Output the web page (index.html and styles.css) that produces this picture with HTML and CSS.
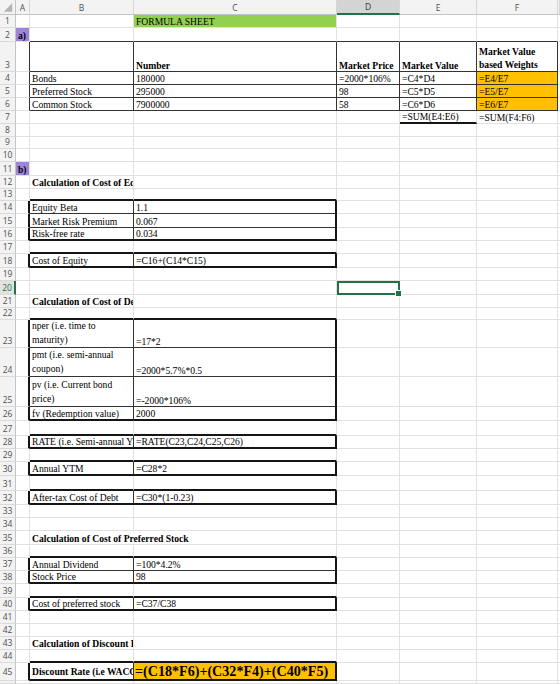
FILE: index.html
```html
<!DOCTYPE html>
<html>
<head>
<meta charset="utf-8">
<link rel="stylesheet" href="styles.css">
</head>
<body>
<div class="sheet">
  <div class="row hd"><div class="corner"><svg width="16" height="15" viewBox="0 0 16 15"><polygon points="13,3 13,12 4,12" fill="#b3b3b3"/></svg></div><div>A</div><div>B</div><div>C</div><div class="selh">D</div><div>E</div><div>F</div><div></div></div>
  <div class="row"><div class="rh">1</div><div></div><div></div><div class="green">FORMULA SHEET</div><div></div><div></div><div></div><div></div></div>
  <div class="row"><div class="rh">2</div><div class="purple bd">a)</div><div class="b"></div><div class="b"></div><div class="b"></div><div class="b"></div><div class="b"></div><div></div></div>
  <div class="row"><div class="rh">3</div><div class="r"></div><div class="b r"></div><div class="b r bd">Number</div><div class="b r bd">Market Price</div><div class="b r bd">Market Value</div><div class="b r bd wr2">Market Value based Weights</div><div></div></div>
  <div class="row"><div class="rh">4</div><div class="r"></div><div class="b r">Bonds</div><div class="b r">180000</div><div class="b r">=2000*106%</div><div class="b r">=C4*D4</div><div class="b r orange">=E4/E7</div><div></div></div>
  <div class="row"><div class="rh">5</div><div class="r"></div><div class="b r">Preferred Stock</div><div class="b r">295000</div><div class="b r">98</div><div class="b r">=C5*D5</div><div class="b r orange">=E5/E7</div><div></div></div>
  <div class="row"><div class="rh">6</div><div class="r"></div><div class="b r">Common Stock</div><div class="b r">7900000</div><div class="b r">58</div><div class="b r">=C6*D6</div><div class="b r orange">=E6/E7</div><div></div></div>
  <div class="row"><div class="rh">7</div><div></div><div></div><div></div><div></div><div class="B">=SUM(E4:E6)</div><div>=SUM(F4:F6)</div><div></div></div>
  <div class="row"><div class="rh">8</div><div></div><div></div><div></div><div></div><div></div><div></div><div></div></div>
  <div class="row"><div class="rh">9</div><div></div><div></div><div></div><div></div><div></div><div></div><div></div></div>
  <div class="row"><div class="rh">10</div><div></div><div></div><div></div><div></div><div></div><div></div><div></div></div>
  <div class="row"><div class="rh">11</div><div class="purple bd">b)</div><div></div><div></div><div></div><div></div><div></div><div></div></div>
  <div class="row"><div class="rh">12</div><div></div><div class="bd">Calculation of Cost of Equity</div><div></div><div></div><div></div><div></div><div></div></div>
  <div class="row"><div class="rh">13</div><div></div><div class="B"></div><div class="B"></div><div></div><div></div><div></div><div></div></div>
  <div class="row"><div class="rh">14</div><div class="R"></div><div class="r b">Equity Beta</div><div class="R b">1.1</div><div></div><div></div><div></div><div></div></div>
  <div class="row"><div class="rh">15</div><div class="R"></div><div class="r b">Market Risk Premium</div><div class="R b">0.067</div><div></div><div></div><div></div><div></div></div>
  <div class="row"><div class="rh">16</div><div class="R"></div><div class="r B">Risk-free rate</div><div class="R B">0.034</div><div></div><div></div><div></div><div></div></div>
  <div class="row"><div class="rh">17</div><div></div><div class="B"></div><div class="B"></div><div></div><div></div><div></div><div></div></div>
  <div class="row"><div class="rh">18</div><div class="R"></div><div class="r B">Cost of Equity</div><div class="R B">=C16+(C14*C15)</div><div></div><div></div><div></div><div></div></div>
  <div class="row"><div class="rh">19</div><div></div><div></div><div></div><div></div><div></div><div></div><div></div></div>
  <div class="row"><div class="rh selr">20</div><div></div><div></div><div></div><div class="sel"></div><div></div><div></div><div></div></div>
  <div class="row"><div class="rh">21</div><div></div><div class="bd">Calculation of Cost of Debt</div><div></div><div></div><div></div><div></div><div></div></div>
  <div class="row"><div class="rh">22</div><div></div><div class="B"></div><div class="B"></div><div></div><div></div><div></div><div></div></div>
  <div class="row"><div class="rh">23</div><div class="R"></div><div class="r b wr">nper (i.e. time to maturity)</div><div class="R b">=17*2</div><div></div><div></div><div></div><div></div></div>
  <div class="row"><div class="rh">24</div><div class="R"></div><div class="r b wr">pmt (i.e. semi-annual coupon)</div><div class="R b">=2000*5.7%*0.5</div><div></div><div></div><div></div><div></div></div>
  <div class="row"><div class="rh">25</div><div class="R"></div><div class="r b wr">pv (i.e. Current bond price)</div><div class="R b">=-2000*106%</div><div></div><div></div><div></div><div></div></div>
  <div class="row"><div class="rh">26</div><div class="R"></div><div class="r B">fv (Redemption value)</div><div class="R B">2000</div><div></div><div></div><div></div><div></div></div>
  <div class="row"><div class="rh">27</div><div></div><div class="B"></div><div class="B"></div><div></div><div></div><div></div><div></div></div>
  <div class="row"><div class="rh">28</div><div class="R"></div><div class="r B">RATE (i.e. Semi-annual YTM)</div><div class="R B">=RATE(C23,C24,C25,C26)</div><div></div><div></div><div></div><div></div></div>
  <div class="row"><div class="rh">29</div><div></div><div class="B"></div><div class="B"></div><div></div><div></div><div></div><div></div></div>
  <div class="row"><div class="rh">30</div><div class="R"></div><div class="r B">Annual YTM</div><div class="R B">=C28*2</div><div></div><div></div><div></div><div></div></div>
  <div class="row"><div class="rh">31</div><div></div><div class="B"></div><div class="B"></div><div></div><div></div><div></div><div></div></div>
  <div class="row"><div class="rh">32</div><div class="R"></div><div class="r B">After-tax Cost of Debt</div><div class="R B">=C30*(1-0.23)</div><div></div><div></div><div></div><div></div></div>
  <div class="row"><div class="rh">33</div><div></div><div></div><div></div><div></div><div></div><div></div><div></div></div>
  <div class="row"><div class="rh">34</div><div></div><div></div><div></div><div></div><div></div><div></div><div></div></div>
  <div class="row"><div class="rh">35</div><div></div><div class="bd span2">Calculation of Cost of Preferred Stock</div><div></div><div></div><div></div><div></div></div>
  <div class="row"><div class="rh">36</div><div></div><div class="B"></div><div class="B"></div><div></div><div></div><div></div><div></div></div>
  <div class="row"><div class="rh">37</div><div class="R"></div><div class="r b">Annual Dividend</div><div class="R b">=100*4.2%</div><div></div><div></div><div></div><div></div></div>
  <div class="row"><div class="rh">38</div><div class="R"></div><div class="r B">Stock Price</div><div class="R B">98</div><div></div><div></div><div></div><div></div></div>
  <div class="row"><div class="rh">39</div><div></div><div class="B"></div><div class="B"></div><div></div><div></div><div></div><div></div></div>
  <div class="row"><div class="rh">40</div><div class="R"></div><div class="r B">Cost of preferred stock</div><div class="R B">=C37/C38</div><div></div><div></div><div></div><div></div></div>
  <div class="row"><div class="rh">41</div><div></div><div></div><div></div><div></div><div></div><div></div><div></div></div>
  <div class="row"><div class="rh">42</div><div></div><div></div><div></div><div></div><div></div><div></div><div></div></div>
  <div class="row"><div class="rh">43</div><div></div><div class="bd">Calculation of Discount Rate</div><div></div><div></div><div></div><div></div><div></div></div>
  <div class="row"><div class="rh">44</div><div></div><div class="B"></div><div class="B"></div><div></div><div></div><div></div><div></div></div>
  <div class="row mid"><div class="rh">45</div><div class="R"></div><div class="r B bd">Discount Rate (i.e WACC)</div><div class="R B orange big">=(C18*F6)+(C32*F4)+(C40*F5)</div><div></div><div></div><div></div><div></div></div>
  <div class="row"><div class="rh"></div><div></div><div></div><div></div><div></div><div></div><div></div><div></div></div>
</div>
</body>
</html>
```

FILE: styles.css
```css
* { box-sizing: border-box; }
html, body { margin: 0; padding: 0; background: #fff; }
body { width: 560px; height: 684px; overflow: hidden; }

.sheet {
  display: grid;
  grid-template-columns: 16px 14px 104px 203px 63px 77px 81px 2px;
  grid-template-rows: 15px 13px 14px 30px 13px 13px 13px 13px 13px 12px 13px 14px 13px 12px 13px 14px 13px 13px 14px 13px 14px 13px 12px 28px 29px 30px 14px 15px 13px 13px 14px 15px 14px 13px 13px 14px 13px 13px 13px 14px 13px 13px 13px 13px 13px 18px 3px;
  font-family: "Liberation Serif", "Times New Roman", serif;
  font-size: 9.6px;
  color: #000;
}

.row { display: contents; }

.row > div {
  border-right: 1px solid #e1e1e1;
  border-bottom: 1px solid #e1e1e1;
  padding: 0 2px;
  overflow: hidden;
  white-space: nowrap;
  display: flex;
  align-items: flex-end;
  line-height: 11px;
  min-width: 0;
}

/* column headers */
.hd > div {
  background: #f3f3f3;
  border-right: 1px solid #d6d6d6;
  border-bottom: 1px solid #c4c4c4;
  justify-content: center;
  align-items: center;
  font-family: "Open Sans", "Liberation Sans", sans-serif;
  font-size: 8.5px;
  color: #505050;
  padding: 0;
}
.hd > .corner { padding: 0; align-items: stretch; justify-content: stretch; border-right-color: #c4c4c4; }
.hd > .selh {
  background: #d4d4d4;
  border-bottom: 2px solid #217346;
  color: #333;
}

/* row headers */
.row > .rh {
  background: #f3f3f3;
  border-right: 1px solid #c4c4c4;
  border-bottom: 1px solid #dadada;
  justify-content: center;
  font-family: "Open Sans", "Liberation Sans", sans-serif;
  font-size: 8.5px;
  color: #505050;
  padding: 0 0 1px;
}
.row > .selr {
  background: #e2e2e2;
  border-right: 2px solid #217346;
  color: #217346;
}

/* fills */
.green { background: #92d050; }
.purple { background: #9e84dc; }
.orange { background: #ffc000; }

/* text */
.bd { font-weight: bold; }
.row > .big { font-size: 14.1px; font-weight: bold; line-height: 16px; padding-left: 1px; }
.row > .wr { white-space: normal; line-height: 14px; }
.row > .wr2 { white-space: normal; line-height: 12.5px; }
.row > .span2 { grid-column: span 2; }
.mid > div { align-items: center; }

/* borders */
.row > .b { border-bottom: 1px solid #333; }
.row > .r { border-right: 1px solid #333; }
.row > .B { border-bottom: 2px solid #151515; }
.row > .R { border-right: 2px solid #151515; }

/* selected cell */
.row > .sel {
  border: 2px solid #217346;
  overflow: visible;
  position: relative;
}
.sel::after {
  content: "";
  position: absolute;
  right: -4px;
  bottom: -4px;
  width: 5px;
  height: 5px;
  background: #217346;
  border: 1px solid #fff;
}
```
